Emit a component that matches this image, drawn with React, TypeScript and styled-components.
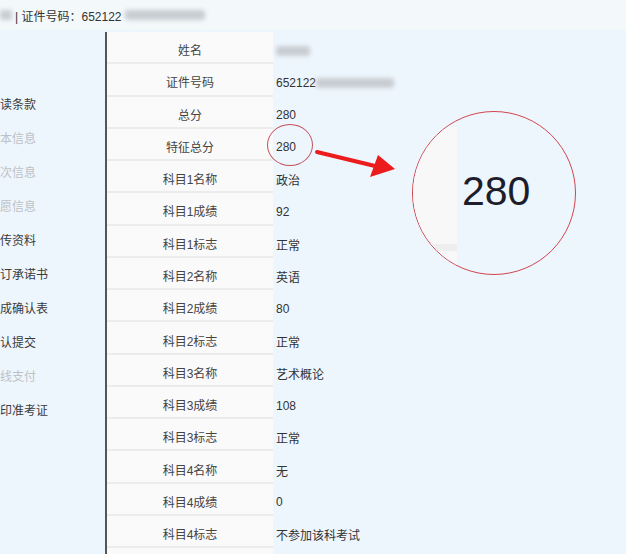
import React from "react";
import styled, { createGlobalStyle } from "styled-components";

const Global = createGlobalStyle`
  html, body { margin: 0; padding: 0; background: #eef6fd; overflow: hidden; }
  body {
    font-family: "Liberation Sans", "Noto Sans CJK SC", sans-serif;
    font-size: 12px;
    color: #333;
  }
`;

const Page = styled.div`
  position: relative;
  width: 626px;
  height: 554px;
  overflow: hidden;
  background: #eef6fd;
`;

const TopBar = styled.div`
  height: 30px;
  box-sizing: border-box;
  background: #f3f8fb;
  display: flex;
  align-items: center;
  gap: 3px;
  color: #333;
`;

const Blur = styled.span<{ $w: number }>`
  display: inline-block;
  width: ${(p) => p.$w}px;
  height: 10px;
  background: #c9cdd2;
  border-radius: 3px;
  filter: blur(2px);
  flex: none;
`;

const TopText = styled.span`
  white-space: nowrap;
`;

const Main = styled.div`
  display: flex;
  padding-top: 2px;
  height: 522px;
`;

const Sidebar = styled.nav`
  width: 105px;
  flex: none;
  padding-top: 56px;
  display: flex;
  flex-direction: column;
`;

const SideItem = styled.div<{ $muted?: boolean }>`
  height: 34px;
  line-height: 34px;
  white-space: nowrap;
  color: ${(p) => (p.$muted ? "#bcc1c6" : "#3a3a3a")};
`;

const Divider = styled.div`
  width: 2px;
  flex: none;
  background: #555;
`;

const Table = styled.div`
  display: grid;
  grid-template-columns: 166px 1fr;
  grid-auto-rows: 32.27px;
  flex: 1;
  align-content: start;
`;

const LabelCell = styled.div`
  box-sizing: border-box;
  background: #fafafa;
  border-bottom: 2px solid #ececec;
  padding-top: 5px;
  display: flex;
  align-items: center;
  justify-content: center;
  color: #444;
`;

const ValueCell = styled.div`
  box-sizing: border-box;
  padding: 5px 0 0 3px;
  display: flex;
  align-items: center;
  color: #333;
  white-space: nowrap;
`;

const SmallRing = styled.div`
  position: absolute;
  left: 267px;
  top: 124px;
  width: 46px;
  height: 42px;
  box-sizing: border-box;
  border: 1px solid #c4505a;
  border-radius: 50%;
`;

const ArrowSvg = styled.svg`
  position: absolute;
  left: 0;
  top: 0;
  width: 626px;
  height: 554px;
  pointer-events: none;
`;

const Magnifier = styled.div`
  position: absolute;
  left: 412px;
  top: 111px;
  width: 164px;
  height: 164px;
  box-sizing: border-box;
  border: 1.5px solid #d0454e;
  border-radius: 50%;
  overflow: hidden;
  background: #eef6fd;
`;

const ZoomCell = styled.div`
  position: absolute;
  left: 0;
  top: 15px;
  width: 44px;
  height: 117px;
  background: #f8f8f8;
  border-bottom: 7px solid #eeeeee;
`;

const ZoomCellBelow = styled.div`
  position: absolute;
  left: 0;
  top: 139px;
  width: 44px;
  height: 30px;
  background: #f8f8f8;
`;

const ZoomText = styled.span`
  position: absolute;
  left: 49px;
  top: 55px;
  font-family: "Liberation Sans", sans-serif;
  font-size: 41px;
  line-height: 48px;
  color: #1d1d2b;
`;

type Row = { label: string; value: React.ReactNode };

const rows: Row[] = [
  { label: "姓名", value: <Blur $w={34} /> },
  {
    label: "证件号码",
    value: (
      <>
        652122
        <Blur $w={78} />
      </>
    ),
  },
  { label: "总分", value: "280" },
  { label: "特征总分", value: "280" },
  { label: "科目1名称", value: "政治" },
  { label: "科目1成绩", value: "92" },
  { label: "科目1标志", value: "正常" },
  { label: "科目2名称", value: "英语" },
  { label: "科目2成绩", value: "80" },
  { label: "科目2标志", value: "正常" },
  { label: "科目3名称", value: "艺术概论" },
  { label: "科目3成绩", value: "108" },
  { label: "科目3标志", value: "正常" },
  { label: "科目4名称", value: "无" },
  { label: "科目4成绩", value: "0" },
  { label: "科目4标志", value: "不参加该科考试" },
  { label: "", value: "" },
];

const menu: { text: string; muted?: boolean }[] = [
  { text: "读条款" },
  { text: "本信息", muted: true },
  { text: "次信息", muted: true },
  { text: "愿信息", muted: true },
  { text: "传资料" },
  { text: "订承诺书" },
  { text: "成确认表" },
  { text: "认提交" },
  { text: "线支付", muted: true },
  { text: "印准考证" },
];

export default function App() {
  return (
    <Page>
      <Global />
      <TopBar>
        <Blur $w={12} />
        <TopText>| 证件号码：652122</TopText>
        <Blur $w={80} />
      </TopBar>
      <Main>
        <Sidebar>
          {menu.map((m) => (
            <SideItem key={m.text} $muted={m.muted}>
              {m.text}
            </SideItem>
          ))}
        </Sidebar>
        <Divider />
        <Table>
          {rows.map((r, i) => (
            <React.Fragment key={i}>
              <LabelCell>{r.label}</LabelCell>
              <ValueCell>{r.value}</ValueCell>
            </React.Fragment>
          ))}
        </Table>
      </Main>
      <SmallRing />
      <ArrowSvg viewBox="0 0 626 554">
        <line x1="317" y1="152" x2="375" y2="166" stroke="#ec1c1c" strokeWidth="4" strokeLinecap="round" />
        <polygon points="378,155 395,169 370,177 374,166" fill="#ec1c1c" />
      </ArrowSvg>
      <Magnifier>
        <ZoomCell />
        <ZoomCellBelow />
        <ZoomText>280</ZoomText>
      </Magnifier>
    </Page>
  );
}
